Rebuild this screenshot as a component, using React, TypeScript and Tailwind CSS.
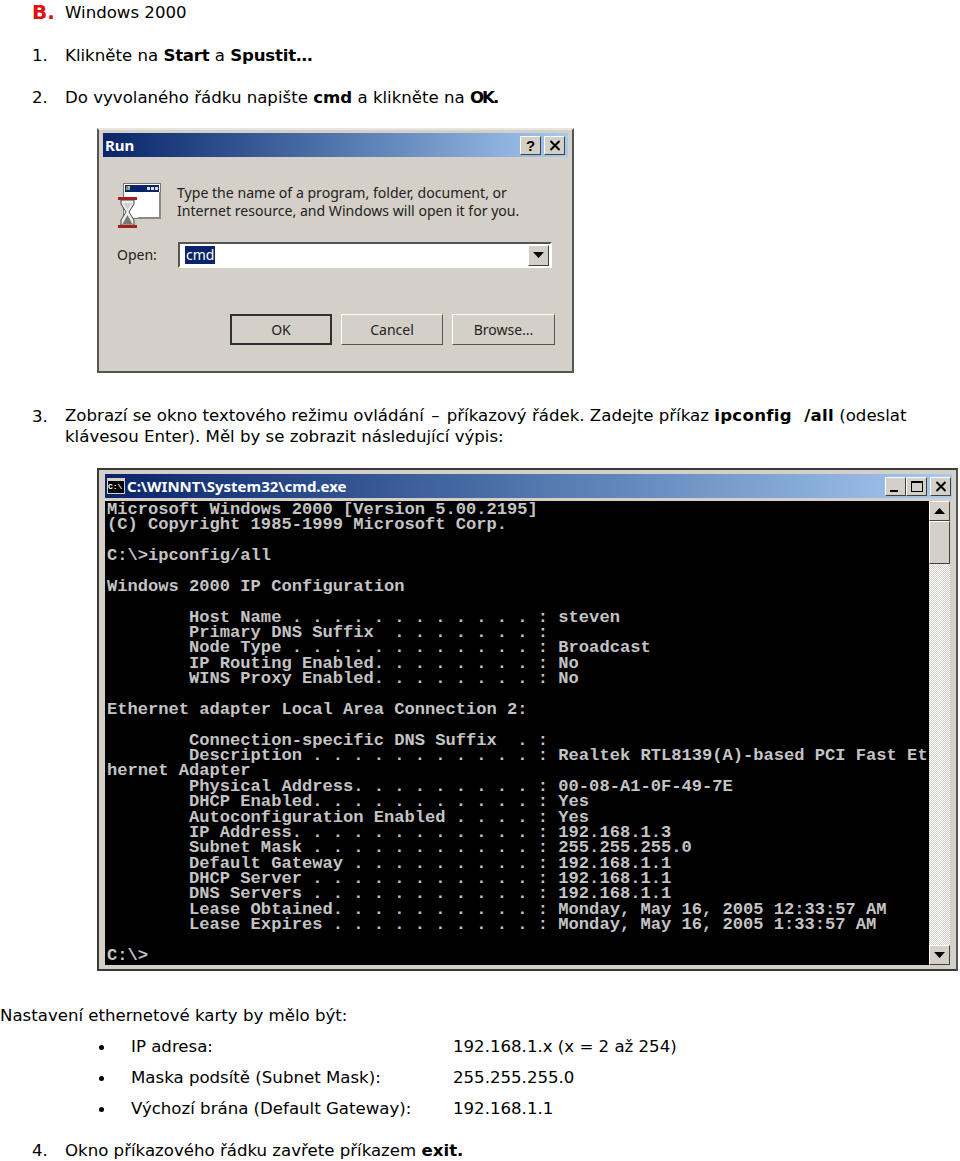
import React from 'react';

const consoleText = `Microsoft Windows 2000 [Version 5.00.2195]
(C) Copyright 1985-1999 Microsoft Corp.

C:\\>ipconfig/all

Windows 2000 IP Configuration

        Host Name . . . . . . . . . . . . : steven
        Primary DNS Suffix  . . . . . . . :
        Node Type . . . . . . . . . . . . : Broadcast
        IP Routing Enabled. . . . . . . . : No
        WINS Proxy Enabled. . . . . . . . : No

Ethernet adapter Local Area Connection 2:

        Connection-specific DNS Suffix  . :
        Description . . . . . . . . . . . : Realtek RTL8139(A)-based PCI Fast Et
hernet Adapter
        Physical Address. . . . . . . . . : 00-08-A1-0F-49-7E
        DHCP Enabled. . . . . . . . . . . : Yes
        Autoconfiguration Enabled . . . . : Yes
        IP Address. . . . . . . . . . . . : 192.168.1.3
        Subnet Mask . . . . . . . . . . . : 255.255.255.0
        Default Gateway . . . . . . . . . : 192.168.1.1
        DHCP Server . . . . . . . . . . . : 192.168.1.1
        DNS Servers . . . . . . . . . . . : 192.168.1.1
        Lease Obtained. . . . . . . . . . : Monday, May 16, 2005 12:33:57 AM
        Lease Expires . . . . . . . . . . : Monday, May 16, 2005 1:33:57 AM

C:\\>`;

const raised = 'border border-t-white border-l-white border-r-[#404040] border-b-[#404040] bg-[#d4d0c8]';

const CloseGlyph = () => (
    <svg width="12" height="11" viewBox="0 0 12 11">
        <path d="M1.5 1 L10.5 10 M10.5 1 L1.5 10" stroke="#000" strokeWidth="2" />
    </svg>
);

const TitleButton: React.FC<{ children: React.ReactNode }> = ({ children }) => (
    <div className={`${raised} w-[21px] h-[19px] flex items-center justify-center`}>{children}</div>
);

const ArrowGlyph: React.FC<{ up?: boolean }> = ({ up }) => (
    <svg width="11" height="6" viewBox="0 0 11 6">
        <path d={up ? 'M5.5 0 L11 6 L0 6 Z' : 'M0 0 L11 0 L5.5 6 Z'} fill="#000" />
    </svg>
);

const RunIcon = () => (
    <svg width="46" height="48" viewBox="0 0 46 48" className="shrink-0">
        <rect x="7.5" y="1.5" width="37" height="35" fill="#fff" stroke="#777" />
        <rect x="9" y="3" width="34" height="7" fill="#0a246a" />
        <rect x="10" y="4" width="2" height="2" fill="#d9534f" />
        <rect x="12" y="4" width="2" height="2" fill="#e0c040" />
        <rect x="10" y="6" width="2" height="2" fill="#5cb85c" />
        <rect x="12" y="6" width="2" height="2" fill="#5bc0de" />
        <rect x="31" y="5" width="3" height="3" fill="#ddd" />
        <rect x="35" y="5" width="3" height="3" fill="#ddd" />
        <rect x="39" y="5" width="3" height="3" fill="#ddd" />
        <path d="M44 10 V36 H22" stroke="#8a8a8a" strokeWidth="2" fill="none" />
        <path d="M5 18 H18 V22 L13 30 L18 38 V43 H5 V38 L10 30 L5 22 Z" fill="#eeeeee" stroke="#444" />
        <path d="M6.5 42 L11.5 33 L16.5 42 Z" fill="#777" />
        <path d="M7 21 H16 L11.5 28 Z" fill="#cfcfcf" />
        <rect x="2" y="15" width="19" height="3" fill="#a3201c" />
        <rect x="2" y="43" width="19" height="3" fill="#a3201c" />
    </svg>
);

const DialogButton: React.FC<{ label: string; primary?: boolean; width: string }> = ({ label, primary, width }) => (
    <div className={primary
        ? `${width} h-[31px] border-2 border-[#303030] bg-[#d4d0c8] flex items-center justify-center`
        : `${width} h-[31px] border border-t-white border-l-white border-r-[#555555] border-b-[#555555] bg-[#d4d0c8] flex items-center justify-center`}>
        {label}
    </div>
);

const RunDialog = () => (
    <div className="w-[477px] h-[245px] ml-[97px] border-2 border-t-[#e8e6e0] border-l-[#555555] border-r-[#555555] border-b-[#555555] bg-[#d4d0c8] pt-[3px] px-[4px] font-['Noto_Sans',sans-serif] text-[14px] text-[#222222]">
        <div className="h-[24px] bg-gradient-to-r from-[#0a246a] to-[#a6caf0] flex items-center justify-between pl-[2px] pr-[3px]">
            <span className="text-white font-bold text-[15px] leading-none">Run</span>
            <div className="flex gap-[3px]">
                <TitleButton><span className="font-['Liberation_Sans',sans-serif] font-bold text-[15px] text-black leading-none">?</span></TitleButton>
                <TitleButton><CloseGlyph /></TitleButton>
            </div>
        </div>
        <div className="flex mt-[25px] pl-[13px]">
            <RunIcon />
            <p className="ml-[15px] mt-[2px] leading-[18px] text-[14.1px] whitespace-nowrap">
                Type the name of a program, folder, document, or<br />
                Internet resource, and Windows will open it for you.
            </p>
        </div>
        <div className="flex items-center mt-[12px] pl-[14px]">
            <span className="w-[61px]">Open:</span>
            <div className="w-[374px] h-[26px] border-2 border-t-[#555555] border-l-[#555555] border-r-white border-b-white bg-white flex items-center justify-between pl-[5px] pr-[1px]">
                <span className="bg-[#0a246a] text-white leading-[18px] px-[1px]">cmd</span>
                <div className={`${raised} w-[21px] h-[21px] flex items-center justify-center`}><ArrowGlyph /></div>
            </div>
        </div>
        <div className="flex gap-[9px] mt-[46px] pl-[127px]">
            <DialogButton label="OK" primary width="w-[102px]" />
            <DialogButton label="Cancel" width="w-[102px]" />
            <DialogButton label="Browse..." width="w-[103px]" />
        </div>
    </div>
);

const CmdWindow = () => (
    <div className="w-[861px] h-[503px] ml-[97px] border-2 border-t-[#3a3a3a] border-l-[#3a3a3a] border-r-[#555555] border-b-[#3a3a3a] bg-[#d4d0c8] pt-[4px] pl-[6px] pr-[4px]">
        <div className="h-[24px] bg-gradient-to-r from-[#0a246a] to-[#a6caf0] flex items-center justify-between pl-[2px] pr-[1px]">
            <div className="flex items-center gap-[2px]">
                <div className="w-[18px] h-[16px] bg-black border border-[#d4d0c8] border-t-[3px] text-white font-bold text-[8px] leading-[11px] font-['Liberation_Mono',monospace] overflow-hidden">C:\</div>
                <span className="text-white font-bold text-[15px] font-['Noto_Sans',sans-serif] leading-none">C:\WINNT\System32\cmd.exe</span>
            </div>
            <div className="flex items-center">
                <TitleButton><span className="w-[8px] h-[2px] mt-[9px] mr-[4px] bg-black" /></TitleButton>
                <TitleButton><span className="w-[12px] h-[11px] border border-t-2 border-black" /></TitleButton>
                <div className="ml-[3px]"><TitleButton><CloseGlyph /></TitleButton></div>
            </div>
        </div>
        <div className="flex h-[464px] mt-[3px] mr-[2px]">
            <pre className="w-[824px] bg-black text-[#c4c4c4] pl-[2px] pt-[1px] font-['Liberation_Mono',monospace] font-bold text-[17.1px] leading-[15.38px]">
                {consoleText}
            </pre>
            <div className="w-[21px] flex flex-col bg-[repeating-conic-gradient(#d4d0c8_0_25%,#ffffff_0_50%)] bg-[length:2px_2px]">
                <div className={`${raised} h-[20px] flex items-center justify-center`}><ArrowGlyph up /></div>
                <div className={`${raised} h-[43px]`} />
                <div className="flex-1" />
                <div className={`${raised} h-[20px] flex items-center justify-center`}><ArrowGlyph /></div>
            </div>
        </div>
    </div>
);

const Step: React.FC<{ n: string; children: React.ReactNode; className?: string }> = ({ n, children, className }) => (
    <div className={`flex pl-[32px] ${className ?? ''}`}>
        <span className="w-[33px] shrink-0">{n}</span>
        <div>{children}</div>
    </div>
);

const SettingRow: React.FC<{ label: string; value: string; className?: string }> = ({ label, value, className }) => (
    <li className={`flex items-center pl-[99px] ${className ?? ''}`}>
        <span className="w-[5px] h-[5px] rounded-full bg-black shrink-0" />
        <span className="w-[322px] ml-[27px] shrink-0">{label}</span>
        <span>{value}</span>
    </li>
);

export default function App() {
    return (
        <div className="w-[960px] h-[1161px] overflow-hidden bg-white text-black pt-[2px] font-['DejaVu_Sans',sans-serif] text-[16.6px] leading-[22px]">
            <div className="flex pl-[32px]">
                <span className="w-[33px] font-bold text-[#e01010] text-[20px] leading-[20px]">B.</span>
                <span>Windows 2000</span>
            </div>
            <Step n="1." className="mt-[21px]">Klikněte na <b className="tracking-[-0.2px]">Start</b> a <b className="tracking-[-0.2px]">Spustit…</b></Step>
            <Step n="2." className="mt-[20px]">Do vyvolaného řádku napište <b>cmd</b> a klikněte na <b className="tracking-[-2px]">OK.</b></Step>
            <div className="mt-[19px]"><RunDialog /></div>
            <Step n="3." className="mt-[33px]">
                <p className="leading-[20.5px] whitespace-nowrap">
                    Zobrazí se okno textového režimu ovládání <span className="mx-[2px]">–</span> příkazový řádek. Zadejte příkaz <b className="tracking-[0.3px]">ipconfig&nbsp; /all</b> (odeslat<br />
                    klávesou Enter). Měl by se zobrazit následující výpis:
                </p>
            </Step>
            <div className="mt-[21px]"><CmdWindow /></div>
            <p className="mt-[34px]">Nastavení ethernetové karty by mělo být:</p>
            <ul>
                <SettingRow className="mt-[9px]" label="IP adresa:" value="192.168.1.x (x = 2 až 254)" />
                <SettingRow className="mt-[9px]" label="Maska podsítě (Subnet Mask):" value="255.255.255.0" />
                <SettingRow className="mt-[9px]" label="Výchozí brána (Default Gateway):" value="192.168.1.1" />
            </ul>
            <Step n="4." className="mt-[20px]">Okno příkazového řádku zavřete příkazem <b>exit.</b></Step>
        </div>
    );
}
